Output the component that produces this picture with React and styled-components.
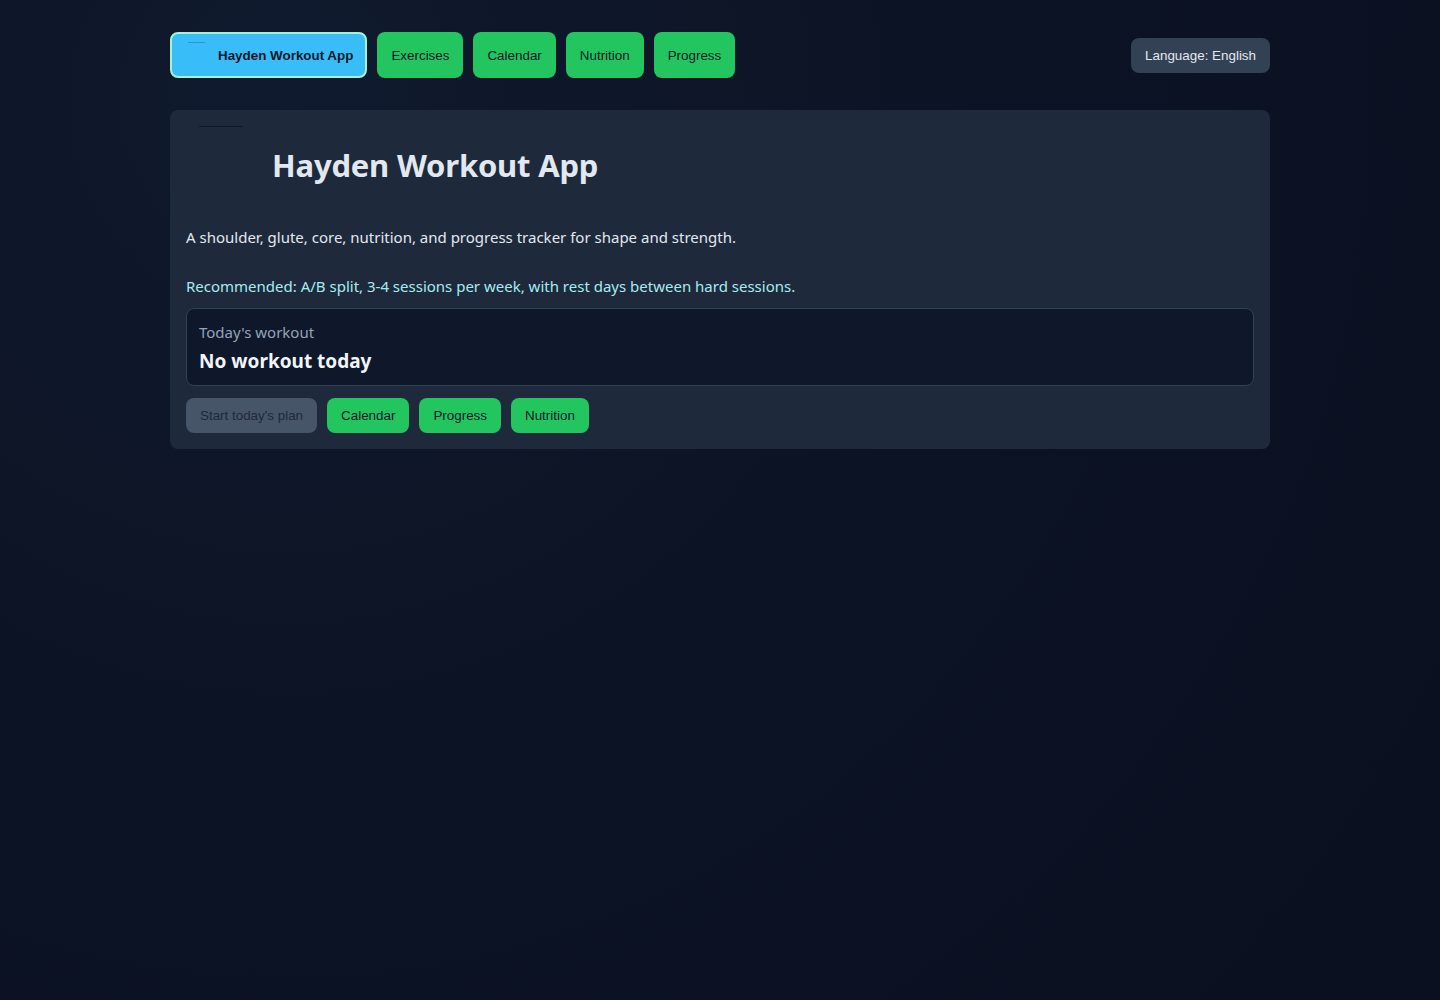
import React from 'react'
import styled, { createGlobalStyle } from 'styled-components'

const GlobalStyle = createGlobalStyle`
  html, body {
    margin: 0;
    padding: 0;
  }
  body {
    min-height: 1000px;
    background: radial-gradient(circle at 20% 10%, #101a2e 0%, #0c1324 45%, #0a1020 100%);
    font-family: "Noto Sans", "Open Sans", sans-serif;
    color: #e2e8f0;
  }
`

const Page = styled.div`
  width: 1100px;
  margin: 0 auto;
  padding-top: 32px;
`

const NavBar = styled.nav`
  display: flex;
  align-items: center;
  justify-content: space-between;
`

const NavGroup = styled.div`
  display: flex;
  gap: 10px;
`

const Button = styled.button`
  font-family: "Liberation Sans", Arial, sans-serif;
  font-size: 13.4px;
  height: ${p => (p.$tall ? '46px' : '35px')};
  padding: 0 14px;
  border-radius: 8px;
  border: none;
  background: ${p => p.$bg || '#22c55e'};
  color: ${p => p.$fg || '#0f172a'};
  cursor: pointer;
`

const BrandButton = styled(Button)`
  position: relative;
  display: flex;
  align-items: center;
  gap: 6px;
  background: #38bdf8;
  border: 2px solid #a7f3d0;
  font-weight: 700;
  color: #0f172a;
  padding: 0 12px 0 16px;
`

const BrokenImg = styled.span`
  display: block;
  align-self: stretch;
  width: ${p => p.$w}px;
  position: relative;
  &::before {
    content: '';
    position: absolute;
    top: ${p => p.$top}px;
    left: ${p => p.$left}px;
    width: ${p => p.$line}px;
    height: 1px;
    background: ${p => p.$color};
  }
`

const LangButton = styled(Button)`
  background: #334155;
  color: #e2e8f0;
`

const Card = styled.section`
  margin-top: 32px;
  background: #1e293b;
  border-radius: 8px;
  padding: 16px;
`

const Header = styled.div`
  display: flex;
  align-items: center;
  gap: 15px;
  height: 80px;
`

const Title = styled.h1`
  margin: 0 0 3px -1px;
  font-size: 31px;
  font-weight: 700;
  color: #e2e8f0;
  letter-spacing: -0.2px;
`

const Text = styled.p`
  margin: ${p => p.$m};
  font-size: 15px;
  line-height: 24px;
  color: ${p => p.$color || '#e2e8f0'};
`

const TodayBox = styled.div`
  margin-top: 10px;
  background: #0f172a;
  border: 1px solid #334155;
  border-radius: 8px;
  padding: 12px 12px 11px;
`

const TodayLabel = styled.div`
  font-size: 15px;
  line-height: 22px;
  color: #94a3b8;
`

const TodayValue = styled.div`
  margin-top: 5px;
  font-size: 19px;
  line-height: 26px;
  font-weight: 700;
  color: #f1f5f9;
`

const Actions = styled.div`
  display: flex;
  gap: 10px;
  margin-top: 12px;
`

export default function App() {
  return (
    <>
      <GlobalStyle />
      <Page>
        <NavBar>
          <NavGroup>
            <BrandButton $tall>
              <BrokenImg $w={24} $top={8} $left={0} $line={17} $color="#1e9ad6" />
              Hayden Workout App
            </BrandButton>
            <Button $tall>Exercises</Button>
            <Button $tall>Calendar</Button>
            <Button $tall>Nutrition</Button>
            <Button $tall>Progress</Button>
          </NavGroup>
          <LangButton>Language: English</LangButton>
        </NavBar>
        <Card>
          <Header>
            <BrokenImg $w={72} $top={0} $left={13} $line={44} $color="#0f172a" />
            <Title>Hayden Workout App</Title>
          </Header>
          <Text $m="19px 0 0">A shoulder, glute, core, nutrition, and progress tracker for shape and strength.</Text>
          <Text $m="25px 0 0" $color="#a5ecf2">
            Recommended: A/B split, 3-4 sessions per week, with rest days between hard sessions.
          </Text>
          <TodayBox>
            <TodayLabel>Today's workout</TodayLabel>
            <TodayValue>No workout today</TodayValue>
          </TodayBox>
          <Actions>
            <Button $bg="#475569" $fg="#1e293b">Start today's plan</Button>
            <Button>Calendar</Button>
            <Button>Progress</Button>
            <Button>Nutrition</Button>
          </Actions>
        </Card>
      </Page>
    </>
  )
}
